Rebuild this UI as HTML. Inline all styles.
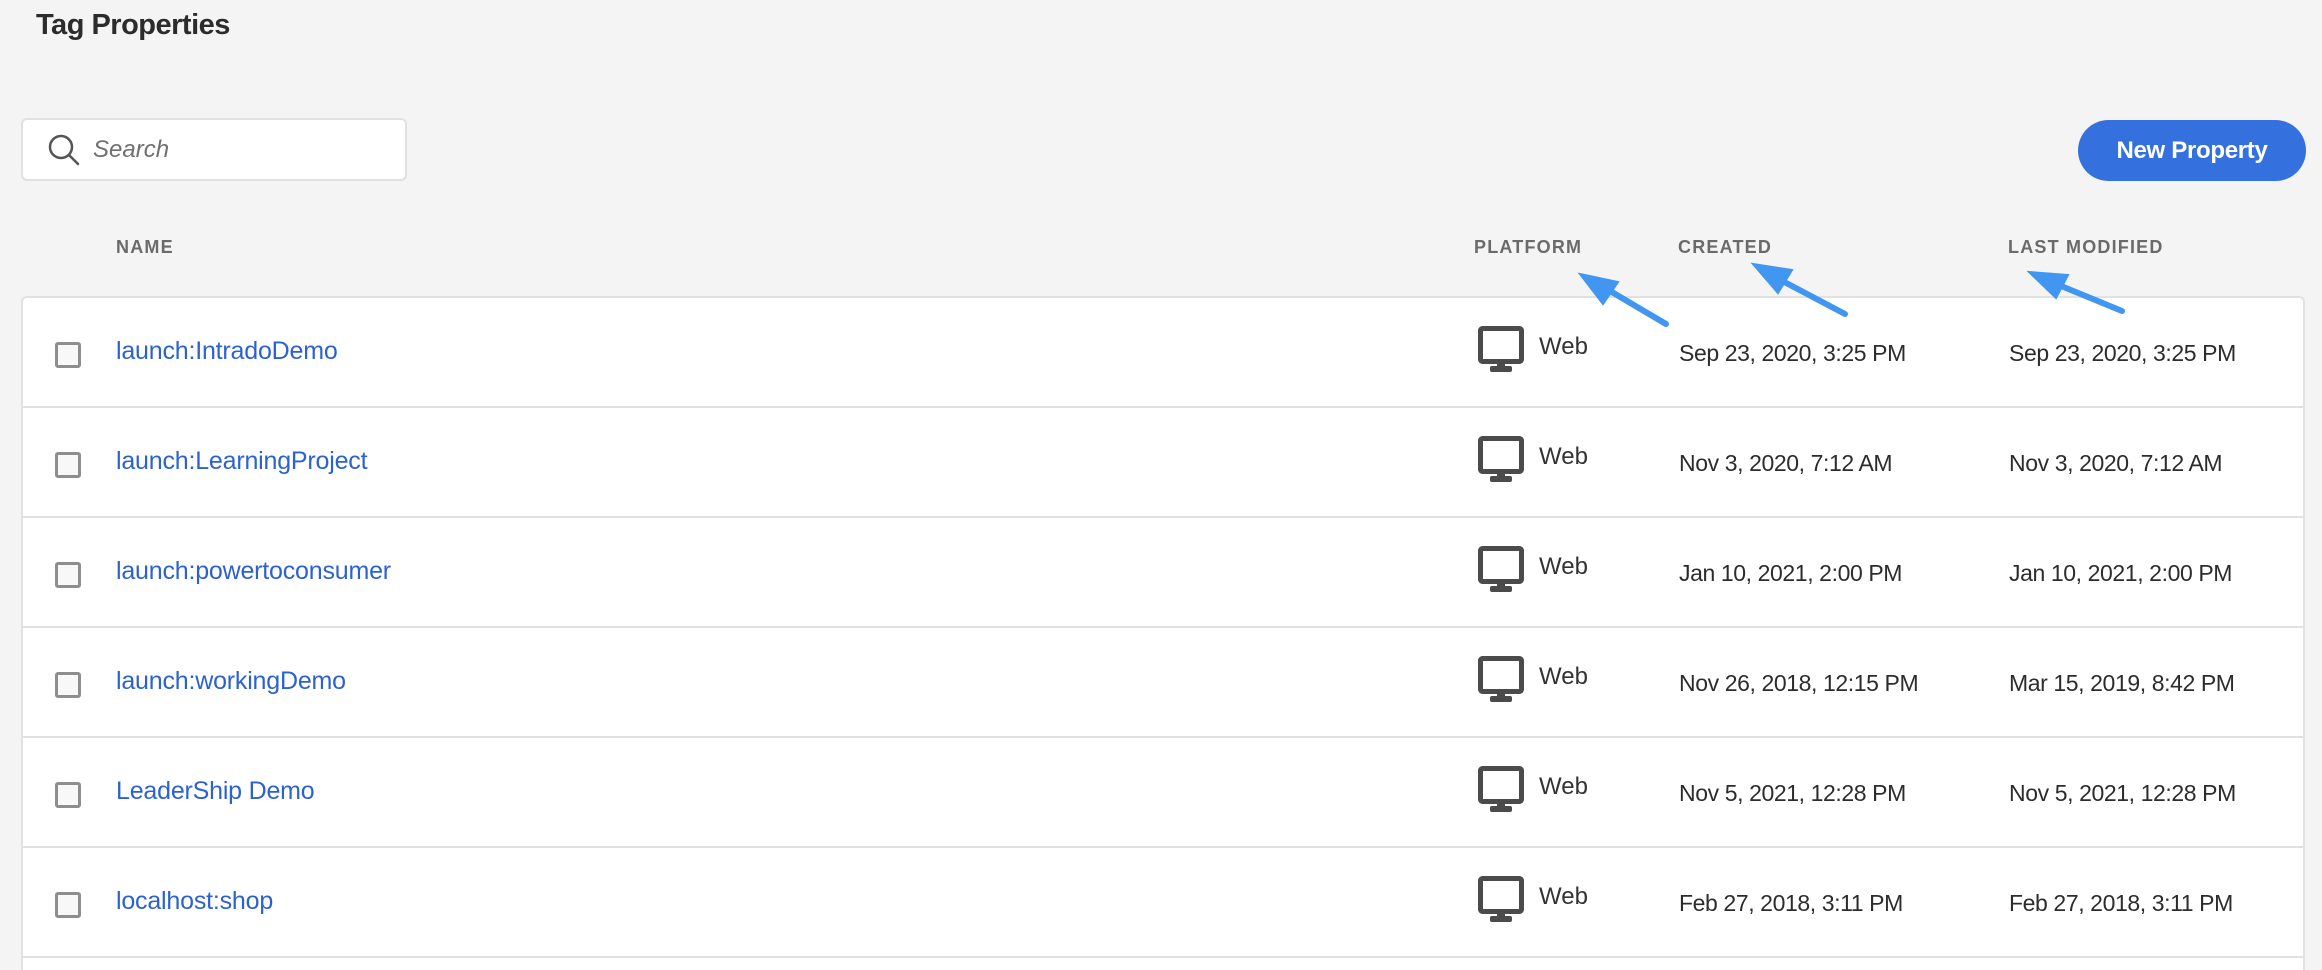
<!DOCTYPE html>
<html><head><meta charset="utf-8"><style>
*{margin:0;padding:0;box-sizing:border-box}
html{width:2322px;height:970px;overflow:hidden}
body{width:2322px;height:970px;background:#f4f4f4;font-family:"Liberation Sans",sans-serif;position:relative;overflow:hidden;color:#2c2c2c}
h1{position:absolute;left:36px;top:9px;font-size:29px;font-weight:bold;color:#2c2c2c;letter-spacing:-0.5px}
.search{position:absolute;left:21px;top:118px;width:386px;height:63px;background:#fff;border:2px solid #e1e1e1;border-radius:6px}
.search span{position:absolute;left:70px;top:16px;font-size:24px;font-style:italic;color:#707070}
.btn{position:absolute;left:2078px;top:120px;width:228px;height:61px;background:#3571de;border-radius:31px;color:#fff;font-weight:bold;font-size:24px;text-align:center;line-height:61px;letter-spacing:-0.3px}
.hd{position:absolute;top:237px;font-size:18px;font-weight:bold;color:#6a6a6a;letter-spacing:1.2px}
.tbl{position:absolute;left:21px;top:296px;width:2284px;height:674px;background:#fff;border:2px solid #e1e1e1;border-bottom:none;border-radius:6px 6px 0 0;overflow:hidden}
.row{position:absolute;left:0;width:100%;height:110px;border-bottom:2px solid #e1e1e1}
.cb{position:absolute;left:32px;top:44px;width:26px;height:26px;border:3px solid #8e8e8e;border-radius:3px;background:#f8f8f8}
.nm{position:absolute;left:93px;top:39px;font-size:25px;color:#2c62d0;letter-spacing:-0.2px}
.mon{position:absolute;left:1455px;top:28px}
.web{position:absolute;left:1516px;top:35px;font-size:24px;color:#333}
.d1,.d2{position:absolute;top:42px;font-size:23px;color:#2c2c2c;letter-spacing:-0.4px}
.d1{left:1656px}.d2{left:1986px}
</style></head><body>
<h1>Tag Properties</h1>
<div class="search">
<svg width="40" height="40" style="position:absolute;left:22px;top:10px" viewBox="0 0 40 40"><circle cx="16" cy="17" r="11" fill="none" stroke="#555" stroke-width="2.5"/><line x1="24" y1="25" x2="33" y2="34" stroke="#555" stroke-width="2.5" stroke-linecap="round"/></svg>
<span>Search</span></div>
<div class="btn">New Property</div>
<div class="hd" style="left:116px">NAME</div>
<div class="hd" style="left:1474px">PLATFORM</div>
<div class="hd" style="left:1678px">CREATED</div>
<div class="hd" style="left:2008px">LAST MODIFIED</div>
<div class="tbl">
<div class="row" style="top:0"><div class="cb"></div><div class="nm">launch:IntradoDemo</div><svg class="mon" width="46" height="48" viewBox="0 0 46 48"><rect x="2.5" y="2.5" width="41" height="33" rx="2" fill="none" stroke="#4b4b4b" stroke-width="5"/><rect x="19" y="36" width="8" height="6" fill="#4b4b4b"/><rect x="12" y="40" width="22" height="6" rx="2" fill="#4b4b4b"/></svg><div class="web">Web</div><div class="d1">Sep 23, 2020, 3:25 PM</div><div class="d2">Sep 23, 2020, 3:25 PM</div></div>
<div class="row" style="top:110px"><div class="cb"></div><div class="nm">launch:LearningProject</div><svg class="mon" width="46" height="48" viewBox="0 0 46 48"><rect x="2.5" y="2.5" width="41" height="33" rx="2" fill="none" stroke="#4b4b4b" stroke-width="5"/><rect x="19" y="36" width="8" height="6" fill="#4b4b4b"/><rect x="12" y="40" width="22" height="6" rx="2" fill="#4b4b4b"/></svg><div class="web">Web</div><div class="d1">Nov 3, 2020, 7:12 AM</div><div class="d2">Nov 3, 2020, 7:12 AM</div></div>
<div class="row" style="top:220px"><div class="cb"></div><div class="nm">launch:powertoconsumer</div><svg class="mon" width="46" height="48" viewBox="0 0 46 48"><rect x="2.5" y="2.5" width="41" height="33" rx="2" fill="none" stroke="#4b4b4b" stroke-width="5"/><rect x="19" y="36" width="8" height="6" fill="#4b4b4b"/><rect x="12" y="40" width="22" height="6" rx="2" fill="#4b4b4b"/></svg><div class="web">Web</div><div class="d1">Jan 10, 2021, 2:00 PM</div><div class="d2">Jan 10, 2021, 2:00 PM</div></div>
<div class="row" style="top:330px"><div class="cb"></div><div class="nm">launch:workingDemo</div><svg class="mon" width="46" height="48" viewBox="0 0 46 48"><rect x="2.5" y="2.5" width="41" height="33" rx="2" fill="none" stroke="#4b4b4b" stroke-width="5"/><rect x="19" y="36" width="8" height="6" fill="#4b4b4b"/><rect x="12" y="40" width="22" height="6" rx="2" fill="#4b4b4b"/></svg><div class="web">Web</div><div class="d1">Nov 26, 2018, 12:15 PM</div><div class="d2">Mar 15, 2019, 8:42 PM</div></div>
<div class="row" style="top:440px"><div class="cb"></div><div class="nm">LeaderShip Demo</div><svg class="mon" width="46" height="48" viewBox="0 0 46 48"><rect x="2.5" y="2.5" width="41" height="33" rx="2" fill="none" stroke="#4b4b4b" stroke-width="5"/><rect x="19" y="36" width="8" height="6" fill="#4b4b4b"/><rect x="12" y="40" width="22" height="6" rx="2" fill="#4b4b4b"/></svg><div class="web">Web</div><div class="d1">Nov 5, 2021, 12:28 PM</div><div class="d2">Nov 5, 2021, 12:28 PM</div></div>
<div class="row" style="top:550px"><div class="cb"></div><div class="nm">localhost:shop</div><svg class="mon" width="46" height="48" viewBox="0 0 46 48"><rect x="2.5" y="2.5" width="41" height="33" rx="2" fill="none" stroke="#4b4b4b" stroke-width="5"/><rect x="19" y="36" width="8" height="6" fill="#4b4b4b"/><rect x="12" y="40" width="22" height="6" rx="2" fill="#4b4b4b"/></svg><div class="web">Web</div><div class="d1">Feb 27, 2018, 3:11 PM</div><div class="d2">Feb 27, 2018, 3:11 PM</div></div>
</div>
<svg width="2322" height="970" style="position:absolute;left:0;top:0">
<g stroke="#4096f0" stroke-width="6" stroke-linecap="round" fill="#4096f0">
<line x1="1666" y1="324" x2="1600" y2="285"/>
<polygon points="1580,274 1618,282 1603,304" stroke-width="2"/>
<line x1="1845" y1="314" x2="1773" y2="276"/>
<polygon points="1753,264 1792,270 1778,293" stroke-width="2"/>
<line x1="2122" y1="311" x2="2049" y2="281"/>
<polygon points="2029,272 2068,275 2056,298" stroke-width="2"/>
</g></svg>
</body></html>
